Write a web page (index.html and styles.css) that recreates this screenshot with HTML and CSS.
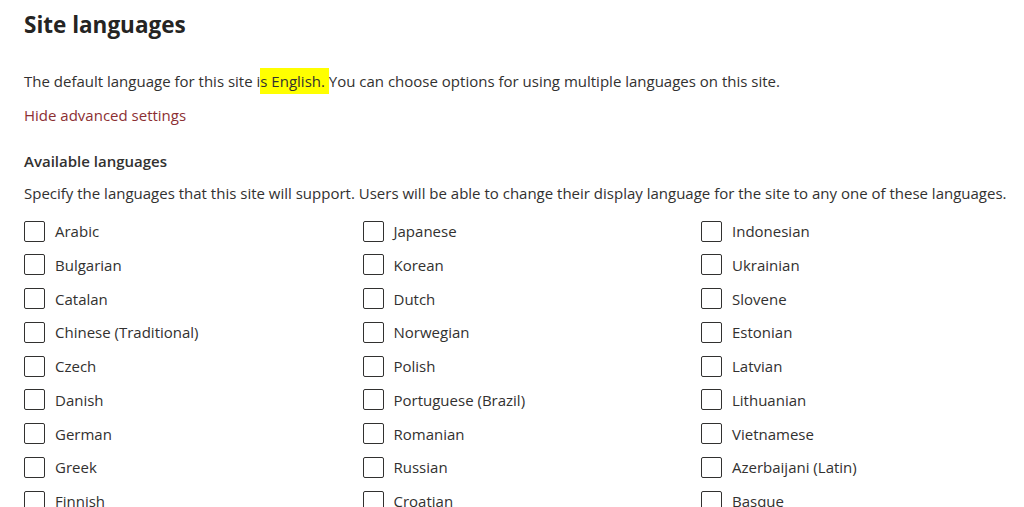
FILE: index.html
```html
<!DOCTYPE html>
<html lang="en">
<head>
<meta charset="utf-8">
<title>Site languages</title>
<link rel="stylesheet" href="styles.css">
</head>
<body>
<main class="page">
  <h1 class="title">Site languages</h1>
  <p class="intro">The default language for this site i<span class="hl">s English. </span>You can choose options for using multiple languages on this site.</p>
  <a class="link" href="#">Hide advanced settings</a>
  <h2 class="subtitle">Available languages</h2>
  <p class="desc">Specify the languages that this site will support. Users will be able to change their display language for the site to any one of these languages.</p>
  <div class="grid">
    <div class="col">
      <label class="item"><span class="box"></span><span>Arabic</span></label>
      <label class="item"><span class="box"></span><span>Bulgarian</span></label>
      <label class="item"><span class="box"></span><span>Catalan</span></label>
      <label class="item"><span class="box"></span><span>Chinese (Traditional)</span></label>
      <label class="item"><span class="box"></span><span>Czech</span></label>
      <label class="item"><span class="box"></span><span>Danish</span></label>
      <label class="item"><span class="box"></span><span>German</span></label>
      <label class="item"><span class="box"></span><span>Greek</span></label>
      <label class="item"><span class="box"></span><span>Finnish</span></label>
    </div>
    <div class="col">
      <label class="item"><span class="box"></span><span>Japanese</span></label>
      <label class="item"><span class="box"></span><span>Korean</span></label>
      <label class="item"><span class="box"></span><span>Dutch</span></label>
      <label class="item"><span class="box"></span><span>Norwegian</span></label>
      <label class="item"><span class="box"></span><span>Polish</span></label>
      <label class="item"><span class="box"></span><span>Portuguese (Brazil)</span></label>
      <label class="item"><span class="box"></span><span>Romanian</span></label>
      <label class="item"><span class="box"></span><span>Russian</span></label>
      <label class="item"><span class="box"></span><span>Croatian</span></label>
    </div>
    <div class="col">
      <label class="item"><span class="box"></span><span>Indonesian</span></label>
      <label class="item"><span class="box"></span><span>Ukrainian</span></label>
      <label class="item"><span class="box"></span><span>Slovene</span></label>
      <label class="item"><span class="box"></span><span>Estonian</span></label>
      <label class="item"><span class="box"></span><span>Latvian</span></label>
      <label class="item"><span class="box"></span><span>Lithuanian</span></label>
      <label class="item"><span class="box"></span><span>Vietnamese</span></label>
      <label class="item"><span class="box"></span><span>Azerbaijani (Latin)</span></label>
      <label class="item"><span class="box"></span><span>Basque</span></label>
    </div>
  </div>
</main>
</body>
</html>
```

FILE: styles.css
```css
html, body {
  margin: 0;
  padding: 0;
  background: #ffffff;
  overflow: hidden;
}
body {
  font-family: "Open Sans", "Noto Sans", "Liberation Sans", sans-serif;
  color: #323130;
  font-size: 15px;
}
.page {
  padding: 10px 0 0 24px;
}
.title {
  margin: 0;
  font-size: 22.5px;
  line-height: 30px;
  font-weight: 700;
  color: #252423;
}
.intro {
  margin: 30px 0 0;
  line-height: 22px;
}
.hl {
  background: #ffff00;
  padding: 3px 0;
}
.link {
  display: inline-block;
  margin-top: 12px;
  color: #8c2f33;
  text-decoration: none;
  line-height: 22px;
}
.subtitle {
  margin: 25px 0 0;
  font-size: 15px;
  line-height: 20px;
  font-weight: 600;
}
.desc {
  margin: 11px 0 0;
  line-height: 22px;
  white-space: nowrap;
}
.grid {
  display: grid;
  grid-template-columns: repeat(3, 338.5px);
  margin-top: 17px;
}
.col {
  display: flex;
  flex-direction: column;
  gap: 13.75px;
}
.item {
  display: flex;
  align-items: center;
  gap: 10px;
  height: 20px;
  line-height: 20px;
}
.box {
  box-sizing: border-box;
  width: 21px;
  height: 21px;
  border: 1px solid #323130;
  border-radius: 2px;
  flex: none;
}
```
